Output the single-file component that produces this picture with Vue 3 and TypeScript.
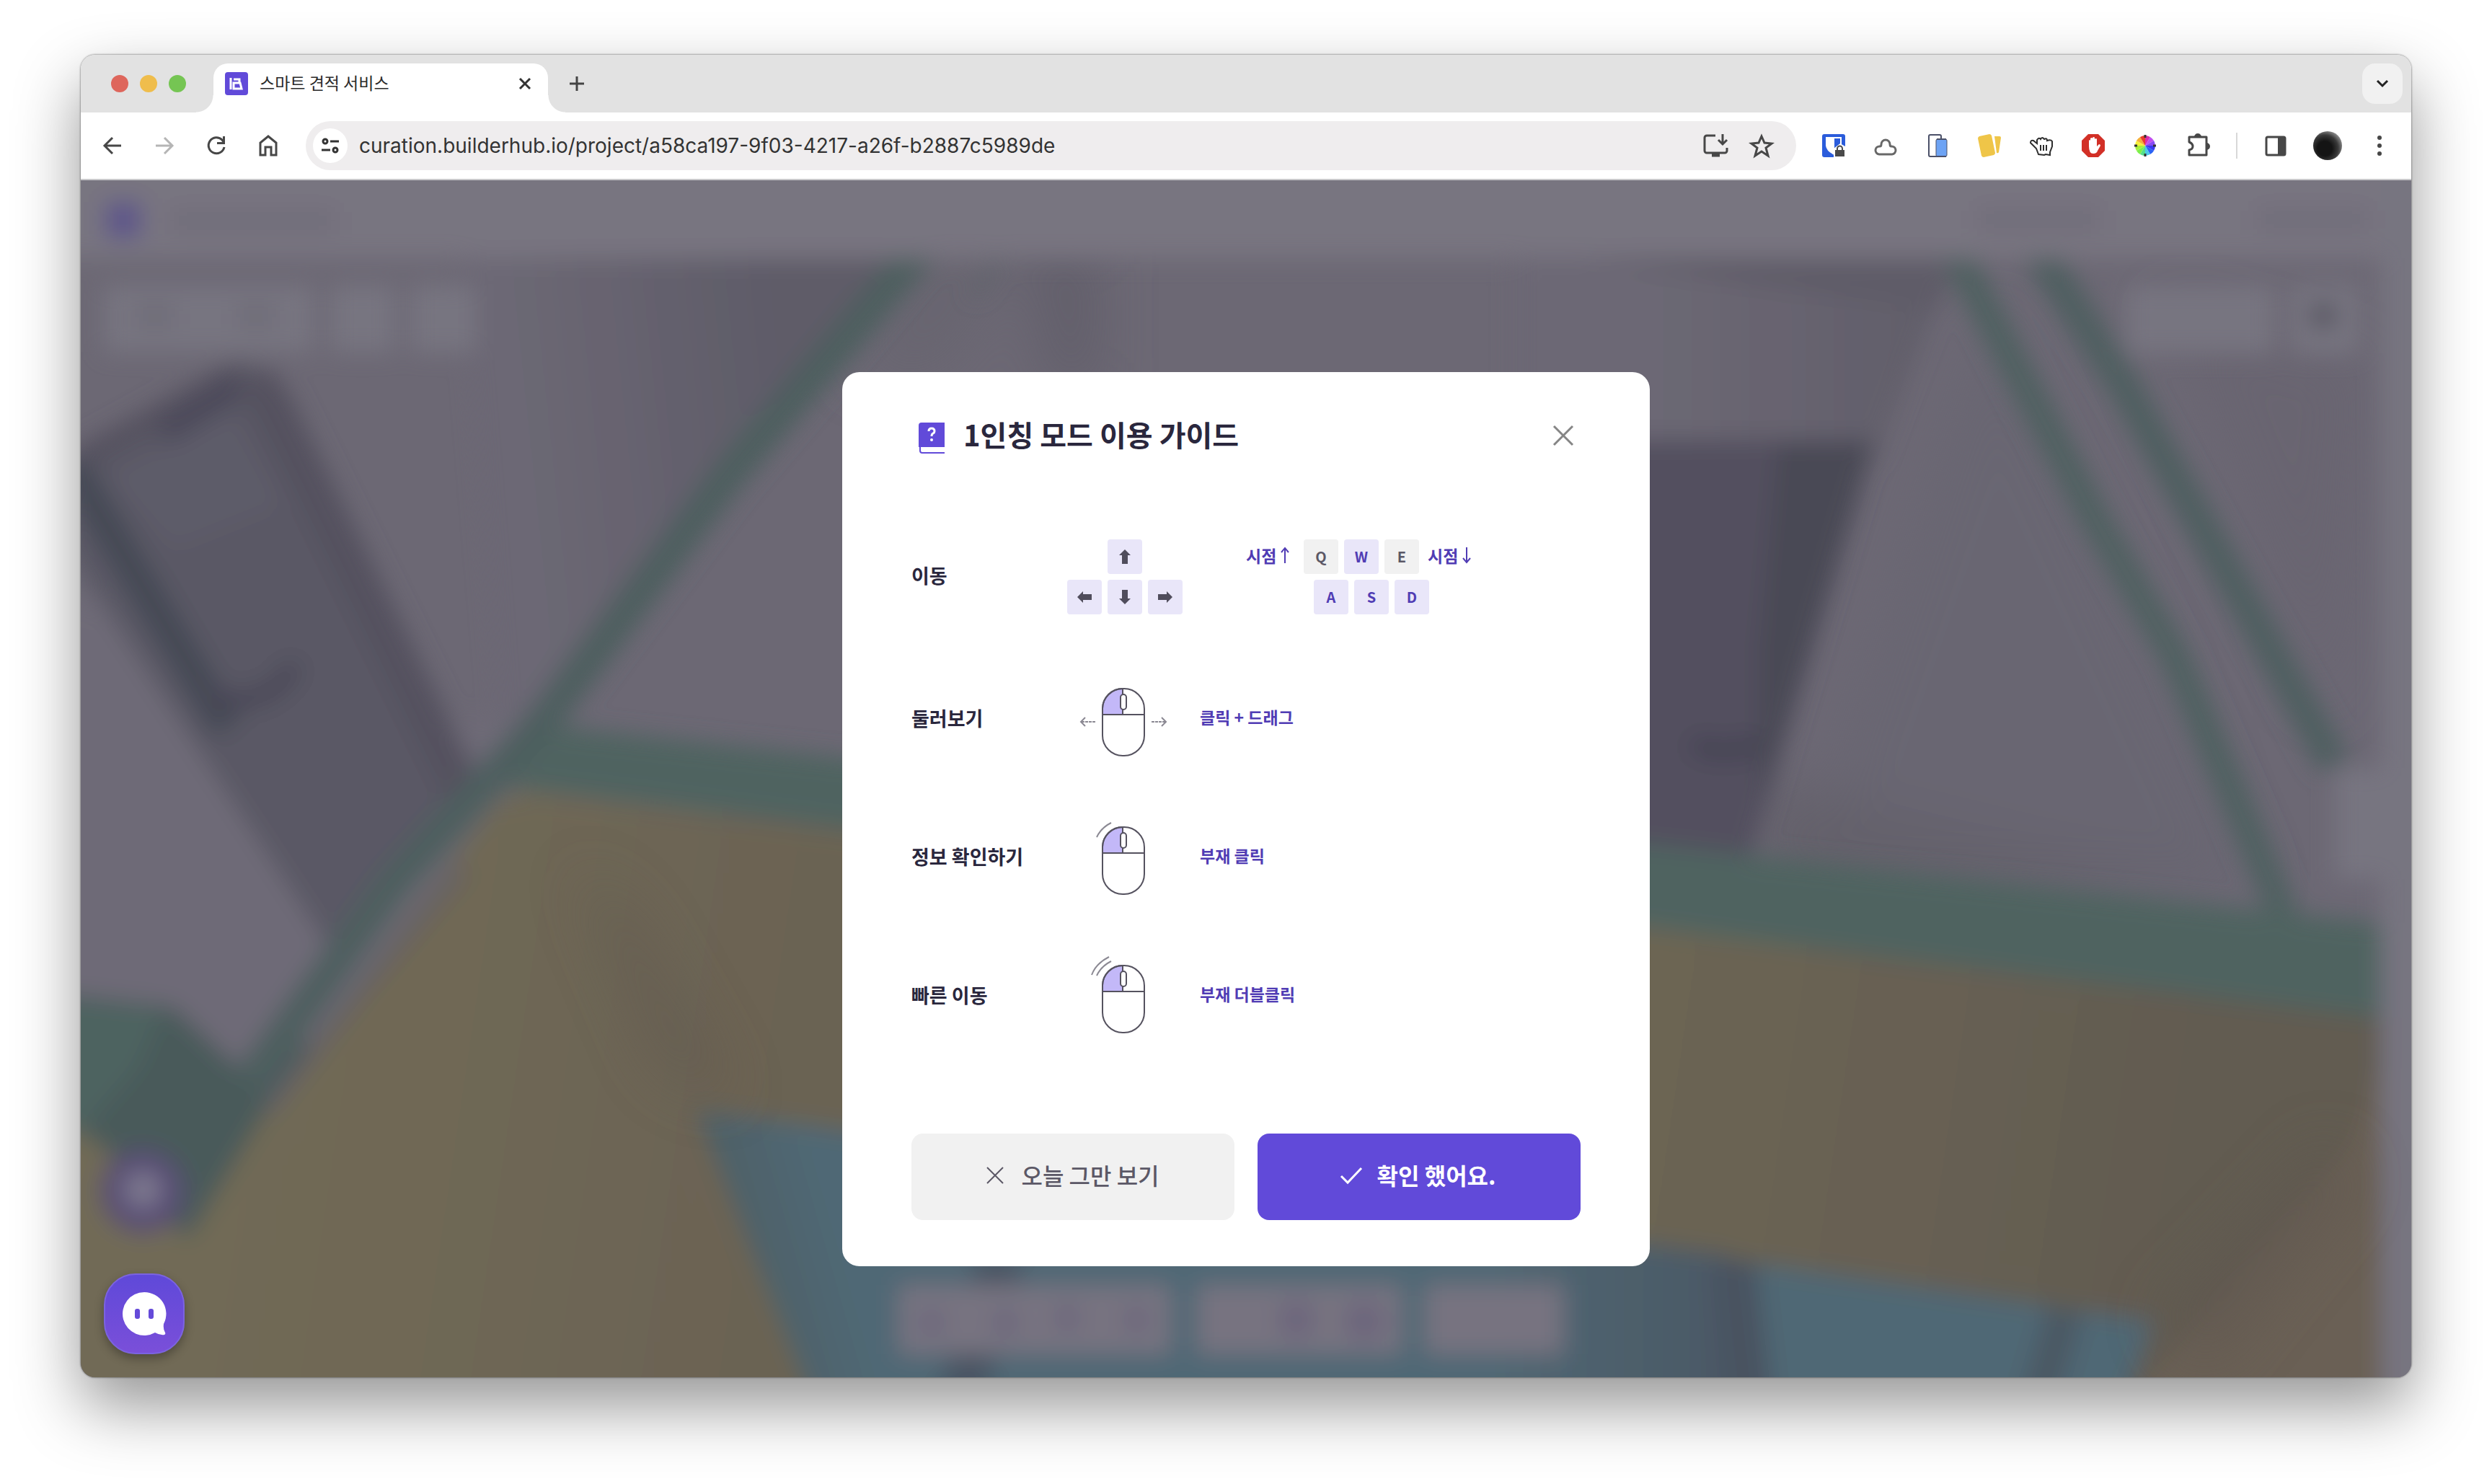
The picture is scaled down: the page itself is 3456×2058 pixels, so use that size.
<script setup lang="ts">
import { ref } from 'vue'

interface GuideRow {
  label: string
  hint: string
  motion: 'drag' | 'click' | 'double'
}

const address = ref('curation.builderhub.io/project/a58ca197-9f03-4217-a26f-b2887c5989de')

const rows: GuideRow[] = [
  { label: '둘러보기', hint: '클릭 + 드래그', motion: 'drag' },
  { label: '정보 확인하기', hint: '부재 클릭', motion: 'click' },
  { label: '빠른 이동', hint: '부재 더블클릭', motion: 'double' },
]

const topKeys = [
  { key: 'Q', active: false },
  { key: 'W', active: true },
  { key: 'E', active: false },
]
const bottomKeys = ['A', 'S', 'D']
const arrowTurns = [270, 180, 90]
const wheel = ['#d92fae', '#c04df0', '#8a4af5', '#3a3af0', '#2a62f5', '#4ec8e8', '#55e08a', '#7df04a', '#a8f03a', '#f5f03a', '#f5b03a', '#e8402a']
</script>

<template>
  <main class="desktop">
    <div class="window">
      <header class="tabstrip">
        <div class="lights"><i class="red"></i><i class="amber"></i><i class="green"></i></div>
        <div class="tab">
          <svg class="favicon" viewBox="0 0 32 32" aria-hidden="true">
            <rect width="32" height="32" rx="4" fill="#614ad9" />
            <path d="M8 8v16M12 10h8v5h-8M12 15h9l2 8H12z" fill="none" stroke="#fff" stroke-width="3" />
          </svg>
          <span class="tab-title">스마트 견적 서비스</span>
          <button class="bare" aria-label="탭 닫기">
            <svg width="24" height="24" viewBox="0 0 24 24"><path d="M5 5l14 14M19 5L5 19" stroke="#333" stroke-width="3" /></svg>
          </button>
        </div>
        <button class="bare new-tab" aria-label="새 탭">
          <svg width="24" height="24" viewBox="0 0 24 24"><path d="M12 2v20M2 12h20" stroke="#444" stroke-width="3" /></svg>
        </button>
        <button class="tab-search" aria-label="탭 검색">
          <svg width="24" height="24" viewBox="0 0 24 24"><path d="M5 8l7 7 7-7" fill="none" stroke="#222" stroke-width="3" /></svg>
        </button>
      </header>

      <nav class="toolbar">
        <div class="nav-buttons">
          <button class="bare" aria-label="뒤로">
            <svg width="32" height="32" viewBox="0 0 32 32"><path d="M28 16H6M16 5L5 16l11 11" fill="none" stroke="#474747" stroke-width="3" /></svg>
          </button>
          <button class="bare" aria-label="앞으로">
            <svg width="32" height="32" viewBox="0 0 32 32"><path d="M4 16h22M16 5l11 11-11 11" fill="none" stroke="#b5b5b5" stroke-width="3" /></svg>
          </button>
          <button class="bare" aria-label="새로고침">
            <svg width="32" height="32" viewBox="0 0 32 32"><path d="M27 18A11 11 0 1 1 24 8l3 4" fill="none" stroke="#474747" stroke-width="3" /><path d="M28 3v11H17v-3h8V3z" fill="#474747" /></svg>
          </button>
          <button class="bare" aria-label="홈">
            <svg width="32" height="32" viewBox="0 0 32 32"><path d="M5 29V12L16 3l11 9v17h-7V18h-8v11z" fill="none" stroke="#474747" stroke-width="3" /></svg>
          </button>
        </div>

        <div class="omnibox">
          <button class="site-info" aria-label="사이트 정보">
            <svg width="32" height="32" viewBox="0 0 32 32" fill="none" stroke="#333" stroke-width="3">
              <circle cx="9" cy="10" r="3" /><path d="M16 10h12M4 22h12" /><circle cx="23" cy="22" r="3" />
            </svg>
          </button>
          <input v-model="address" class="address" type="text" aria-label="주소" />
          <button class="bare" aria-label="앱 설치">
            <svg width="40" height="40" viewBox="0 0 40 40" fill="none" stroke="#474747" stroke-width="3">
              <path d="M20 6H8a3 3 0 0 0-3 3v18a3 3 0 0 0 3 3h25a3 3 0 0 0 3-3v-4" /><path d="M30 4v14M24 12l6 6 6-6" /><path d="M15 33h11" stroke-width="5" />
            </svg>
          </button>
          <button class="bare" aria-label="북마크">
            <svg width="40" height="40" viewBox="0 0 40 40"><path d="M20 7l4 9 10 1-8 6 3 11-9-6-9 6 3-11-8-6 10-1z" fill="none" stroke="#474747" stroke-width="3" /></svg>
          </button>
        </div>

        <div class="extensions">
          <button class="bare" aria-label="비밀번호 관리자">
            <svg width="32" height="32" viewBox="0 0 32 32">
              <rect width="32" height="32" rx="3" fill="#2b5cdb" /><path d="M5 4h22v12q-1 9-10 13Q6 24 5 16z" fill="#fff" /><path d="M17 6h8v10q-1 6-8 9z" fill="#2b5cdb" />
              <path d="M16 20l9-7 9 5v16H16z" fill="#fff" /><path d="M18 22h13v9H18z" fill="#4a4a4a" /><path d="M21 23v-3a3 3 0 0 1 7 0v3" fill="none" stroke="#4a4a4a" stroke-width="2" />
            </svg>
          </button>
          <button class="bare" aria-label="클라우드">
            <svg width="32" height="32" viewBox="0 0 32 32"><path d="M7 28a5 5 0 0 1 1-11q2 0 2-3a6 6 0 0 1 12 0q0 3 2 3a5 5 0 0 1 1 11z" fill="none" stroke="#686868" stroke-width="3" /></svg>
          </button>
          <button class="bare" aria-label="화면 크기">
            <svg width="32" height="32" viewBox="0 0 32 32"><rect x="4" y="1" width="17" height="30" rx="2" fill="#fff" stroke="#4b5068" stroke-width="2" /><rect x="14" y="7" width="15" height="24" rx="2" fill="#6da3f4" stroke="#4b5068" stroke-width="1" /><path d="M15 7h13M15 31h13" stroke="#4b5068" stroke-width="2" /></svg>
          </button>
          <button class="bare" aria-label="메모">
            <svg width="32" height="32" viewBox="0 0 32 32" fill="#efc548"><path d="M2 3L16 0q2 0 3 2l5 24q0 2-2 3L8 32q-2 0-3-2L0 6q0-2 2-3zM23 3h7q2 0 2 2l-3 20q-1 2-3 1z" /></svg>
          </button>
          <button class="bare" aria-label="손 도구">
            <svg width="32" height="32" viewBox="0 0 32 32"><path d="M12 28L9 20 1 12q0-4 4-3l5 4V8q3-4 5-1 2-4 5 0 4-2 4 2 5-2 7 1v7l-3 8v4l-6-1-2 1z" fill="#fff" stroke="#2e2e2e" stroke-width="2" /><path d="M15 15v8M19 15v8M23 15v8" stroke="#2e2e2e" stroke-width="2" /></svg>
          </button>
          <button class="bare" aria-label="광고 차단">
            <svg width="32" height="32" viewBox="0 0 32 32"><path d="M9 0h14l9 9v14l-9 9H9l-9-9V9z" fill="#d23027" /><path d="M10 17V9q1-2 2 0v6V6q2-2 3 0v8V5q2-2 3 0v9V7q2-2 3 0v10l3-3q2 0 2 2l-4 7q-1 4-6 4-6 0-6-10z" fill="#fff" /></svg>
          </button>
          <button class="bare" aria-label="색상 선택">
            <svg width="32" height="32" viewBox="0 0 32 32">
              <path v-for="(c, i) in wheel" :key="c" d="M16 16V2A14 14 0 0 1 23 4z" :fill="c" :transform="`rotate(${i * 30} 16 16)`" />
              <path d="M16 1v4M16 27v4M1 16h4M27 16h4" stroke="#333" stroke-width="3" />
            </svg>
          </button>
          <button class="bare" aria-label="확장 프로그램">
            <svg width="36" height="36" viewBox="0 0 36 36"><path d="M5 6h24v25H5v-7q5-1 5-5t-5-6z" fill="none" stroke="#474747" stroke-width="3" stroke-linejoin="round" /><path d="M12 6a5 5 0 0 1 10 0zM29 14a5 5 0 0 1 0 10z" fill="#474747" /></svg>
          </button>
        </div>
        <div class="profile">
          <button class="bare" aria-label="측면 패널">
            <svg width="32" height="32" viewBox="0 0 32 32"><rect x="3" y="4" width="26" height="25" rx="2" fill="none" stroke="#474747" stroke-width="3" /><path d="M19 4h10v25H19z" fill="#474747" /></svg>
          </button>
          <button class="bare avatar" aria-label="프로필"></button>
          <button class="bare" aria-label="메뉴">
            <svg width="32" height="32" viewBox="0 0 32 32" fill="#474747"><circle cx="16" cy="5" r="3" /><circle cx="16" cy="16" r="3" /><circle cx="16" cy="27" r="3" /></svg>
          </button>
        </div>
      </nav>

      <section class="stage">
        <svg class="scene" viewBox="112 250 3232 1660" preserveAspectRatio="none" aria-hidden="true">
          <defs>
            <filter id="soft" filterUnits="userSpaceOnUse" x="0" y="150" width="3456" height="1860"><feGaussianBlur stdDeviation="16" /></filter>
            <filter id="haze" filterUnits="userSpaceOnUse" x="0" y="150" width="3456" height="1860"><feGaussianBlur stdDeviation="40" /></filter>
            <linearGradient id="wall" gradientUnits="userSpaceOnUse" x1="720" y1="600" x2="1100" y2="560"><stop offset="0" stop-color="#6c6874" /><stop offset="1" stop-color="#5e5b68" /></linearGradient>
            <linearGradient id="floor" gradientUnits="userSpaceOnUse" x1="300" y1="1500" x2="3000" y2="1900"><stop offset="0" stop-color="#716a56" /><stop offset=".3" stop-color="#6b6353" /><stop offset=".72" stop-color="#6c6553" /><stop offset="1" stop-color="#625b51" /></linearGradient>
            <linearGradient id="bay" gradientUnits="userSpaceOnUse" x1="2288" y1="0" x2="2720" y2="0"><stop offset="0" stop-color="#6c6874" /><stop offset="1" stop-color="#605d69" /></linearGradient>
            <linearGradient id="pool" gradientUnits="userSpaceOnUse" x1="1010" y1="1700" x2="1150" y2="1660"><stop offset="0" stop-color="#4e6066" /><stop offset="1" stop-color="#506875" /></linearGradient>
            <linearGradient id="poolside" gradientUnits="userSpaceOnUse" x1="2080" y1="0" x2="2420" y2="0"><stop offset="0" stop-color="#506773" /><stop offset="1" stop-color="#4a5764" /></linearGradient>
          </defs>
          <rect x="0" y="150" width="3456" height="1860" fill="#6c6874" />
          <g filter="url(#haze)">
            <path d="M1300 340L1420 340 1300 516H1180z" fill="#686570" />
            <path d="M1430 340h90v200h-60z" fill="#605d69" />
            <path d="M3000 420L3230 1000 3280 500z" fill="#696571" />
            <path d="M2760 420L3130 1240H2480z" fill="#696672" />
            <path d="M2430 1080l660 160h-640z" fill="#63606b" />
          </g>
          <g filter="url(#soft)">
            <path d="M640 340H1290L700 1060z" fill="url(#wall)" />
            <path d="M2100 360H2710L2600 640H2100z" fill="url(#bay)" />
            <path d="M2180 355H2710L2690 430z" fill="#5e5b67" />
            <path d="M726 1096L3320 1413V1960H60V1400z" fill="url(#floor)" />
            <path d="M60 800L460 1000 740 1000 700 1100 370 1520H60z" fill="#6e6b77" />
            <path d="M90 640L340 500 400 540 680 1110 460 1320 90 760z" fill="#5a5865" />
            <path d="M150 660L320 570 390 700 240 760z" fill="#5d5b69" />
            <path d="M355 520L655 1130" stroke="#54515f" stroke-width="50" />
            <path d="M95 640L315 1010" stroke="#454855" stroke-width="46" />
            <path d="M110 635L330 515" stroke="#54515f" stroke-width="30" />
            <path d="M225 602L330 535" stroke="#4c495a" stroke-width="34" />
            <path d="M290 962Q370 990 410 920" fill="none" stroke="#4a4757" stroke-width="26" />
            <path d="M2100 610H2600L2428 1190H2100z" fill="#52505e" />
            <path d="M2466 614H2598L2440 1120 2440 900z" fill="#4a4855" />
            <path d="M2345 1030Q2390 1052 2440 1030" fill="none" stroke="#474554" stroke-width="30" />
            <path d="M2712 350L2908 725 3016 910 3168 1270" fill="none" stroke="#506060" stroke-width="42" />
            <path d="M2828 350L2948 540 3054 730 3238 1062" fill="none" stroke="#4f5f60" stroke-width="46" />
            <path d="M740 1004L3320 1282V1414L700 1090z" fill="#4f6461" />
            <path d="M60 1376L240 1396 330 1480 390 1440 440 1450 375 1530 260 1720 180 1620 60 1530z" fill="#4a5a5a" />
            <path d="M60 1385L225 1400 190 1480 112 1570 60 1560z" fill="#4e6460" />
            <path d="M1286 335L1009 661 749 1005 549 1222 400 1425 345 1500" fill="none" stroke="#4e5f5e" stroke-width="48" />
            <path d="M640 1205L500 1370 370 1540" stroke="#625f69" stroke-width="16" fill="none" />
            <path d="M1392 350L1350 410" stroke="#5f636a" stroke-width="12" />
            <path d="M3260 1590L3330 1400V1960H2940z" fill="#6b6055" />
            <path d="M965 1538L2988 1832 2940 1960H1132z" fill="url(#pool)" />
            <path d="M1390 1740L1330 1950" stroke="#4a5463" stroke-width="64" />
            <path d="M2080 1700L2400 1740V1950H2080z" fill="url(#poolside)" />
            <path d="M2405 1750L2428 1950" stroke="#495361" stroke-width="60" />
            <path d="M2865 1815L2825 1950" stroke="#4b5864" stroke-width="50" />
            <rect x="60" y="200" width="3340" height="158" fill="#787580" />
            <rect x="3302" y="200" width="100" height="1800" fill="#777480" />
            <rect x="3238" y="1065" width="130" height="154" fill="#777480" />
            <g fill="#777480">
              <rect x="144" y="396" width="291" height="92" /><rect x="458" y="396" width="90" height="92" /><rect x="570" y="396" width="90" height="92" />
              <rect x="2948" y="396" width="206" height="94" /><rect x="3178" y="396" width="92" height="94" />
            </g>
            <g fill="#777380"><rect x="1246" y="1782" width="378" height="96" /><rect x="1660" y="1782" width="284" height="96" /><rect x="1976" y="1782" width="192" height="96" /></g>
            <rect x="146" y="280" width="50" height="50" fill="#5d558a" />
            <path d="M236 306H465M2742 304H2912M3130 304H3285" stroke="#6f6c78" stroke-width="28" />
            <path d="M190 438h50M330 438h50" stroke="#6d6a76" stroke-width="28" />
            <circle cx="3222" cy="438" r="20" fill="#585662" />
            <g fill="#6c657b"><circle cx="1292" cy="1834" r="18" /><circle cx="1394" cy="1834" r="18" /><circle cx="1480" cy="1828" r="18" /><circle cx="1576" cy="1830" r="18" /><circle cx="1798" cy="1830" r="26" /><circle cx="1892" cy="1832" r="28" /></g>
            <circle cx="198" cy="1652" r="58" fill="#584d75" /><circle cx="198" cy="1650" r="26" fill="#7d788f" />
          </g>
          <g filter="url(#haze)" opacity=".6">
            <path d="M800 1200L880 1280 1020 1530 920 1480z" fill="#615950" />
            <path d="M3230 1580L2990 1830 3060 1900 3270 1640z" fill="#5f5750" />
          </g>
        </svg>

        <section class="modal" role="dialog" aria-labelledby="guide-title">
          <header class="modal-head">
            <svg class="book" viewBox="0 0 56 56" aria-hidden="true">
              <path d="M14 10h32v34H10V14q0-4 4-4z" fill="#614ad9" />
              <path d="M12 44v5q0 3 3 3h31" fill="none" stroke="#614ad9" stroke-width="2" /><path d="M15 45h31v4H15z" fill="#fff" />
              <path d="M24 22q0-4 4-4t4 4q0 2-2 3t-2 4" fill="none" stroke="#fff" stroke-width="3" /><circle cx="28" cy="34" r="2" fill="#fff" />
            </svg>
            <h1 id="guide-title">1인칭 모드 이용 가이드</h1>
            <button class="bare close" aria-label="닫기">
              <svg width="48" height="48" viewBox="0 0 48 48"><path d="M11 11l26 26M37 11L11 37" stroke="#858585" stroke-width="3" /></svg>
            </button>
          </header>

          <div class="guide">
            <div class="row first">
              <h2>이동</h2>
              <div class="arrows">
                <kbd><svg width="24" height="24" viewBox="0 0 24 24"><path d="M12 2l8 8h-4v12H8V10H4z" /></svg></kbd>
                <div class="keys">
                  <kbd v-for="turn in arrowTurns" :key="turn"><svg width="24" height="24" viewBox="0 0 24 24"><path d="M12 2l8 8h-4v12H8V10H4z" :transform="`rotate(${turn} 12 12)`" /></svg></kbd>
                </div>
              </div>
              <div class="letters">
                <div class="keys">
                  <span class="view">시점<svg class="tilt" viewBox="0 0 12 24" aria-label="위"><path d="M6 23V2M1 8l5-6 5 6" /></svg></span>
                  <kbd v-for="k in topKeys" :key="k.key" :class="{ muted: !k.active }">{{ k.key }}</kbd>
                  <span class="view after">시점<svg class="tilt" viewBox="0 0 12 24" aria-label="아래"><path d="M6 1v21M1 16l5 6 5-6" /></svg></span>
                </div>
                <div class="keys lower">
                  <kbd v-for="k in bottomKeys" :key="k">{{ k }}</kbd>
                </div>
              </div>
            </div>

            <div v-for="row in rows" :key="row.label" class="row">
              <h2>{{ row.label }}</h2>
              <svg class="mouse" viewBox="0 0 176 120" fill="none" stroke="#55525f" stroke-width="2" aria-hidden="true">
                <path d="M57 53V44a28 28 0 0 1 28-27v36z" fill="#c3b8f8" />
                <rect x="57" y="17" width="58" height="93" rx="28" /><path d="M57 53h58M85 17v36" /><rect x="82" y="25" width="8" height="21" rx="4" fill="#fff" />
                <g v-if="row.motion === 'drag'" stroke="#8b8993">
                  <path d="M33 57l-6 6 6 6M139 57l6 6-6 6" /><path d="M28 63h20M125 63h19" stroke-dasharray="4 1" />
                </g>
                <path v-if="row.motion !== 'drag'" d="M49 31Q55 18 69 11" stroke="#8b8993" />
                <path v-if="row.motion === 'double'" d="M42 30Q48 14 66 5" stroke="#8b8993" />
              </svg>
              <p>{{ row.hint }}</p>
            </div>
          </div>

          <footer class="actions">
            <button class="action later">
              <svg width="32" height="32" viewBox="0 0 32 32"><path d="M5 6l22 22M27 6L5 28" stroke="#5b5866" stroke-width="2" /></svg>
              오늘 그만 보기
            </button>
            <button class="action confirm">
              <svg width="32" height="32" viewBox="0 0 32 32"><path d="M2 18l9 9L30 7" fill="none" stroke="#fff" stroke-width="3" /></svg>
              확인 했어요.
            </button>
          </footer>
        </section>

        <button class="chat" aria-label="채팅 상담">
          <svg width="72" height="72" viewBox="0 0 72 72"><path d="M36 6a30 30 0 1 0 15 56q7 4 13 3 2-1 1-3-3-5-2-12a30 30 0 0 0-27-44z" fill="#fff" /><rect x="23" y="29" width="7" height="14" rx="3" fill="#654ad9" /><rect x="42" y="29" width="7" height="14" rx="3" fill="#654ad9" /></svg>
        </button>
      </section>
    </div>
  </main>
</template>

<style>
body {
  margin: 0;
  background: #fff;
}
</style>

<style scoped>
* {
  box-sizing: border-box;
}
.desktop {
  min-height: 100vh;
  padding: 76px 112px 148px;
  font-family: "Noto Sans CJK KR", "Noto Sans", sans-serif;
}
.window {
  overflow: hidden;
  border-radius: 20px;
  box-shadow: 0 0 2px 1px rgba(0, 0, 0, 0.3), 0 40px 90px rgba(0, 0, 0, 0.42);
}
button {
  display: flex;
  align-items: center;
  justify-content: center;
  border: 0;
  font-family: inherit;
}
svg {
  display: block;
  flex: none;
}
.bare {
  padding: 0;
  background: none;
}
.tabstrip {
  display: flex;
  height: 80px;
  padding: 12px 12px 0 42px;
  background: #e2e2e2;
}
.lights {
  display: flex;
  gap: 16px;
  padding-top: 16px;
  margin-right: 38px;
}
.lights i {
  width: 24px;
  height: 24px;
  border-radius: 50%;
}
.red {
  background: #de665c;
}
.amber {
  background: #efbd4c;
}
.green {
  background: #75c553;
}
.tab {
  position: relative;
  display: flex;
  align-items: center;
  width: 464px;
  padding: 0 20px 12px 16px;
  border-radius: 20px 20px 0 0;
  background: #fff;
}
.tab::before,
.tab::after {
  content: "";
  position: absolute;
  bottom: 0;
  width: 24px;
  height: 24px;
}
.tab::before {
  right: 100%;
  background: radial-gradient(circle at 0 0, transparent 23px, #fff 24px);
}
.tab::after {
  left: 100%;
  background: radial-gradient(circle at 100% 0, transparent 23px, #fff 24px);
}
.favicon {
  width: 32px;
  height: 32px;
  margin-right: 16px;
}
.tab-title {
  flex: 1;
  padding-bottom: 4px;
  font-size: 23px;
  line-height: 32px;
  color: #2b2b2b;
}
.new-tab {
  height: 56px;
  margin-left: 28px;
}
.tab-search {
  width: 56px;
  height: 56px;
  margin-left: auto;
  padding: 0;
  border-radius: 18px;
  background: #f1f1f1;
}
.toolbar {
  display: flex;
  align-items: center;
  height: 94px;
  padding: 0 28px;
  border-bottom: 2px solid #c9c9cb;
  background: #fff;
}
.nav-buttons {
  display: flex;
  gap: 40px;
  margin-right: 36px;
}
.omnibox {
  display: flex;
  flex: 1;
  align-items: center;
  gap: 24px;
  height: 68px;
  padding: 0 28px 0 10px;
  border-radius: 34px;
  background: #efedee;
}
.site-info {
  width: 48px;
  height: 48px;
  margin-right: -8px;
  padding: 0;
  border-radius: 50%;
  background: #fff;
}
.address {
  flex: 1;
  min-width: 0;
  padding: 0;
  border: 0;
  outline: 0;
  background: none;
  font: 28px/40px Inter, Roboto, sans-serif;
  color: #333;
}
.extensions {
  display: flex;
  align-items: center;
  gap: 40px;
  padding-right: 34px;
  margin-left: 36px;
  border-right: 2px solid #d8d8d8;
}
.profile {
  display: flex;
  align-items: center;
  gap: 36px;
  margin-left: 37px;
}
.avatar {
  width: 40px;
  height: 40px;
  border-radius: 50%;
  background: radial-gradient(circle at 40% 60%, #141414 30%, #3a3a3a 55%, #8a8a8a 75%);
}
.stage {
  position: relative;
  overflow: hidden;
  padding: 266px 0 154px;
  background: #6c6874;
}
.scene {
  position: absolute;
  inset: 0;
  width: 100%;
  height: 100%;
}
.modal {
  position: relative;
  width: 1120px;
  max-width: 100%;
  margin: 0 auto;
  padding: 60px 96px 64px;
  border-radius: 24px;
  background: #fff;
  color: #2a273d;
}
.modal-head {
  display: flex;
  align-items: center;
  height: 56px;
  margin-bottom: 66px;
}
.book {
  width: 56px;
  height: 56px;
  margin-right: 16px;
}
h1 {
  margin: 0;
  padding-bottom: 4px;
  font-size: 40px;
  line-height: 52px;
  font-weight: 700;
}
.close {
  width: 48px;
  height: 48px;
  margin-left: auto;
}
.guide {
  margin-bottom: 94px;
}
.row {
  display: grid;
  grid-template-columns: 192px 176px 1fr;
  column-gap: 16px;
  align-items: center;
  height: 192px;
}
.row.first {
  height: 204px;
}
h2 {
  margin: 0;
  padding-bottom: 4px;
  font-size: 27px;
  line-height: 40px;
  font-weight: 700;
}
p {
  margin: 0;
  padding-bottom: 8px;
  font-size: 23px;
  line-height: 36px;
  font-weight: 700;
  color: #503cb4;
}
.mouse {
  width: 176px;
  height: 120px;
}
.arrows {
  display: flex;
  flex-direction: column;
  align-items: center;
  gap: 8px;
}
.letters {
  display: flex;
  flex-direction: column;
  gap: 8px;
  padding-left: 64px;
}
.keys {
  display: flex;
  gap: 8px;
}
.lower {
  padding-left: 94px;
}
kbd {
  display: flex;
  align-items: center;
  justify-content: center;
  width: 48px;
  height: 48px;
  border-radius: 4px;
  background: #e9e6f9;
  font-family: inherit;
  font-size: 20px;
  line-height: 32px;
  font-weight: 700;
  color: #503cb4;
}
kbd svg {
  fill: #504d5c;
}
kbd.muted {
  background: #f1f1f1;
  color: #5b5866;
}
.view {
  display: flex;
  align-items: center;
  gap: 6px;
  width: 72px;
  height: 48px;
  padding-bottom: 4px;
  font-size: 23px;
  line-height: 44px;
  font-weight: 700;
  white-space: nowrap;
  color: #503cb4;
}
.view.after {
  padding-left: 4px;
}
.tilt {
  width: 12px;
  height: 24px;
  fill: none;
  stroke: currentColor;
  stroke-width: 2;
}
.actions {
  display: grid;
  grid-template-columns: 1fr 1fr;
  gap: 32px;
}
.action {
  gap: 20px;
  height: 120px;
  padding: 0 4px 6px 0;
  border-radius: 16px;
  font-size: 32px;
  line-height: 48px;
}
.later {
  background: #f1f1f1;
  font-weight: 500;
  color: #5b5866;
}
.confirm {
  background: #614ad9;
  font-weight: 700;
  color: #fff;
}
.chat {
  position: absolute;
  left: 32px;
  bottom: 32px;
  width: 112px;
  height: 112px;
  padding: 0;
  border: 2px solid #7b63e0;
  border-radius: 44px;
  background: linear-gradient(#5f49d9, #7a4fd9);
  box-shadow: 0 6px 14px rgba(0, 0, 0, 0.3);
}
</style>
